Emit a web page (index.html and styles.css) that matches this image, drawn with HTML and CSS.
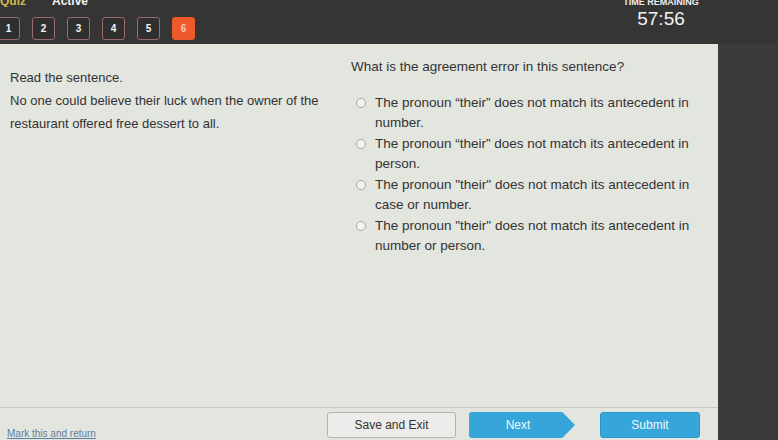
FILE: index.html
```html
<!DOCTYPE html>
<html>
<head>
<meta charset="utf-8">
<link rel="stylesheet" href="styles.css">
</head>
<body>
<div class="screen">
  <header class="topbar">
    <div class="nav">
      <div class="strip">
        <span class="tab tab-quiz">Quiz</span>
        <span class="tab tab-active">Active</span>
      </div>
      <div class="qnums">
        <span class="qnum">1</span>
        <span class="qnum">2</span>
        <span class="qnum">3</span>
        <span class="qnum">4</span>
        <span class="qnum">5</span>
        <span class="qnum current">6</span>
      </div>
    </div>
    <div class="timer">
      <div class="strip timer-strip"><span class="timer-label">TIME REMAINING</span></div>
      <div class="timer-value">57:56</div>
    </div>
  </header>
  <div class="main">
    <section class="panel">
      <div class="content">
        <div class="passage">
          <p>Read the sentence.</p>
          <p>No one could believe their luck when the owner of the restaurant offered free dessert to all.</p>
        </div>
        <div class="question">
          <p class="prompt">What is the agreement error in this sentence?</p>
          <ul class="options">
            <li class="option"><span class="radio"></span><span class="opt-text">The pronoun “their” does not match its antecedent in number.</span></li>
            <li class="option"><span class="radio"></span><span class="opt-text">The pronoun “their” does not match its antecedent in person.</span></li>
            <li class="option"><span class="radio"></span><span class="opt-text">The pronoun "their" does not match its antecedent in case or number.</span></li>
            <li class="option"><span class="radio"></span><span class="opt-text">The pronoun "their" does not match its antecedent in number or person.</span></li>
          </ul>
        </div>
      </div>
      <footer class="footer">
        <a class="mark" href="#">Mark this and return</a>
        <div class="actions">
          <button class="btn btn-save">Save and Exit</button>
          <button class="btn btn-next">Next</button>
          <button class="btn btn-submit">Submit</button>
        </div>
      </footer>
    </section>
    <div class="side"></div>
  </div>
</div>
</body>
</html>
```
FILE: styles.css
```css
html, body {
  margin: 0;
  padding: 0;
  background: #383838;
}
body {
  font-family: "Liberation Sans", Arial, sans-serif;
  width: 778px;
  height: 440px;
  overflow: hidden;
}
.screen {
  width: 778px;
  height: 440px;
  display: flex;
  flex-direction: column;
  overflow: hidden;
}
.topbar {
  height: 44px;
  flex: none;
  background: #353535;
  display: flex;
  justify-content: space-between;
  padding-right: 72px;
}
.strip {
  height: 7px;
  overflow: hidden;
  display: flex;
  align-items: flex-end;
}
.tab {
  font-size: 12px;
  line-height: 12px;
  font-weight: bold;
}
.tab-quiz {
  color: #d6b94c;
  width: 52px;
}
.tab-active {
  color: #f2f2f2;
}
.qnums {
  display: flex;
  gap: 12px;
  margin-top: 10px;
  margin-left: -3px;
}
.qnum {
  width: 21px;
  height: 21px;
  border: 1.5px solid #9b6b6b;
  border-radius: 3px;
  background: #2f2f2f;
  color: #f4f4f4;
  font-size: 10px;
  font-weight: bold;
  display: flex;
  align-items: center;
  justify-content: center;
}
.qnum.current {
  background: #f0592c;
  border-color: #f0592c;
  color: #f8c9a8;
}
.timer {
  width: 90px;
  display: flex;
  flex-direction: column;
  align-items: center;
}
.timer-strip {
  justify-content: center;
  width: 100%;
}
.timer-label {
  font-size: 9px;
  line-height: 9px;
  font-weight: bold;
  color: #eeeeee;
  white-space: nowrap;
}
.timer-value {
  margin-top: 1px;
  font-size: 19px;
  line-height: 22px;
  color: #f2f2f2;
}
.main {
  flex: 1;
  display: flex;
}
.panel {
  width: 718px;
  background: #e3e5df;
  display: flex;
  flex-direction: column;
}
.side {
  flex: 1;
  background: #3b3b3b;
}
.content {
  flex: 1;
  display: flex;
  color: #333333;
  font-size: 13px;
}
.content p {
  margin: 0;
}
.passage {
  width: 341px;
  padding-left: 10px;
  padding-top: 22px;
  line-height: 23px;
}
.question {
  flex: 1;
  padding-top: 13px;
  line-height: 20px;
  font-size: 13.5px;
}
.prompt {
  margin-bottom: 16px !important;
}
.options {
  list-style: none;
  margin: 0;
  padding: 0;
  display: flex;
  flex-direction: column;
  gap: 1px;
}
.option {
  display: flex;
  align-items: flex-start;
}
.radio {
  flex: none;
  width: 8px;
  height: 8px;
  border: 1px solid #a8a8a8;
  border-radius: 50%;
  background: #f3f3f1;
  margin: 5px 9px 0 5px;
}
.opt-text {
  width: 328px;
}
.footer {
  height: 28px;
  border-top: 1px solid #c7c9c4;
  display: flex;
  align-items: flex-start;
  justify-content: space-between;
  padding: 4px 18px 0 7px;
}
.mark {
  font-size: 10px;
  color: #5d7fa0;
  margin-top: 16px;
  text-decoration: underline;
}
.actions {
  display: flex;
  align-items: center;
}
.btn {
  height: 26px;
  font-family: "Liberation Sans", Arial, sans-serif;
  font-size: 12px;
  border-radius: 3px;
  padding: 0;
  cursor: pointer;
}
.btn-save {
  width: 129px;
  background: #ececea;
  border: 1px solid #b3b3b3;
  color: #333333;
}
.btn-next {
  width: 106px;
  margin-left: 13px;
  background: #35a5da;
  border: none;
  color: #eef8fd;
  padding-right: 8px;
  clip-path: polygon(0 0, 88% 0, 100% 50%, 88% 100%, 0 100%);
}
.btn-submit {
  width: 100px;
  margin-left: 25px;
  background: #35a5da;
  border: 1px solid #2e95c8;
  color: #eef8fd;
}
```
